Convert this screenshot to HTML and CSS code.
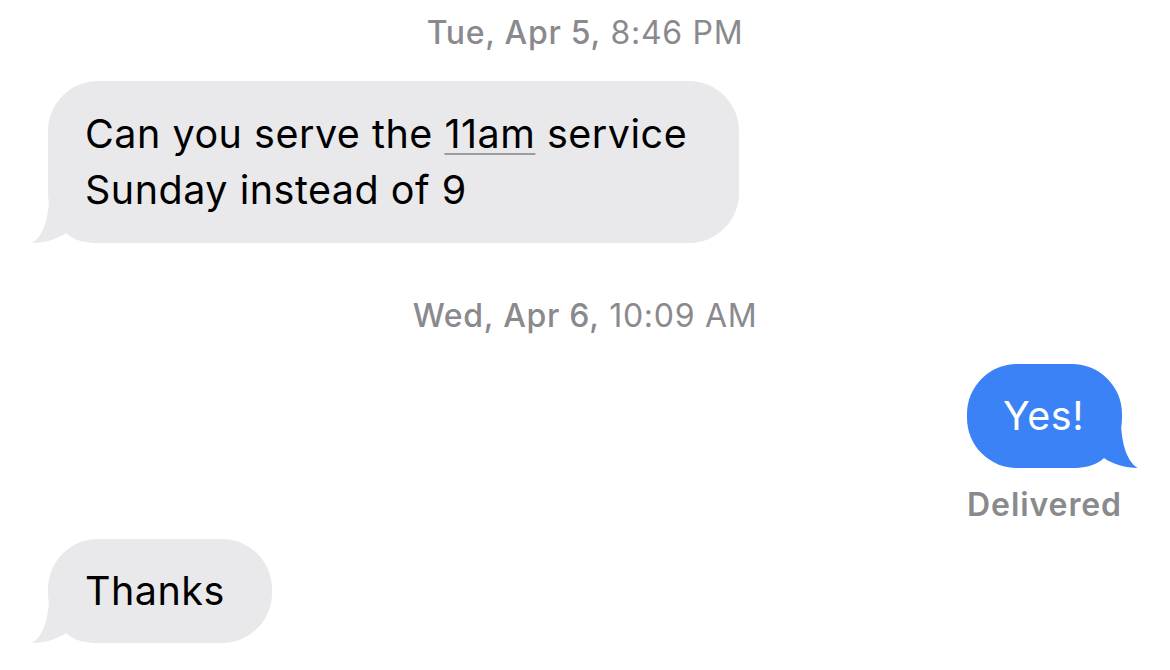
FILE: index.html
```html
<!DOCTYPE html>
<html lang="en">
<head>
<meta charset="utf-8">
<title>Messages</title>
<link rel="stylesheet" href="styles.css">
</head>
<body>
<main class="thread">
  <div class="stamp stamp-first"><span class="stamp-date">Tue, Apr 5,</span> 8:46 PM</div>

  <div class="row row-in">
    <div class="bubble bubble-in bubble-wide">
      <svg class="tail tail-in" viewBox="-16 -44 66 44" width="66" height="44" aria-hidden="true"><path d="M1,-44 C0,-18 -8,-4 -16,0 C-4,0 10,-4 18,-10 C24,-4 34,0 50,0 L50,-44 Z"/></svg>
      <span class="text">Can you serve the <span class="link">11am</span> service<br>Sunday instead of 9</span>
    </div>
  </div>

  <div class="stamp stamp-second"><span class="stamp-date">Wed, Apr 6,</span> 10:09 AM</div>

  <div class="row row-out">
    <div class="bubble bubble-out">
      <svg class="tail tail-out" viewBox="-16 -44 66 44" width="66" height="44" aria-hidden="true"><path d="M1,-44 C0,-18 -8,-4 -16,0 C-4,0 10,-4 18,-10 C24,-4 34,0 50,0 L50,-44 Z"/></svg>
      <span class="text">Yes!</span>
    </div>
  </div>
  <div class="status">Delivered</div>

  <div class="row row-in row-last">
    <div class="bubble bubble-in bubble-short">
      <svg class="tail tail-in" viewBox="-16 -44 66 44" width="66" height="44" aria-hidden="true"><path d="M1,-44 C0,-18 -8,-4 -16,0 C-4,0 10,-4 18,-10 C24,-4 34,0 50,0 L50,-44 Z"/></svg>
      <span class="text">Thanks</span>
    </div>
  </div>
</main>
</body>
</html>
```

FILE: styles.css
```css
html, body {
  margin: 0;
  padding: 0;
  background: #ffffff;
}

body {
  font-family: Inter, "Noto Sans", "Liberation Sans", sans-serif;
  -webkit-font-smoothing: antialiased;
}

.thread {
  display: flex;
  flex-direction: column;
  padding: 13px 48px 0 48px;
}

.stamp {
  text-align: center;
  color: #8a8a8e;
  font-size: 32px;
  line-height: 40px;
  letter-spacing: 0.7px;
  font-weight: 400;
}

.stamp-date {
  font-weight: 500;
}

.stamp-second {
  margin-top: 53px;
}

.row {
  display: flex;
  margin-top: 28px;
}

.row-in {
  justify-content: flex-start;
}

.row-out {
  justify-content: flex-end;
}

.row-last {
  margin-top: 16px;
}

.bubble {
  position: relative;
  font-size: 39.5px;
  line-height: 56px;
  letter-spacing: 0.5px;
  padding: 24px 49px 24px 37px;
  border-radius: 50px;
}

.text {
  position: relative;
  z-index: 1;
}

.bubble-wide {
  padding-top: 25px;
  padding-bottom: 25px;
  padding-right: 52px;
}

.bubble-short {
  padding-right: 47px;
}

.bubble-in {
  background: #e9e9eb;
  color: #000000;
}

.bubble-out {
  background: #3a82f6;
  color: #ffffff;
  padding: 24px 38px 24px 36px;
}

.link {
  text-decoration: underline;
  text-decoration-color: #9b9ba0;
  text-decoration-thickness: 2px;
  text-underline-offset: 5px;
}

.tail {
  position: absolute;
  bottom: 0;
  display: block;
  z-index: 0;
}

.tail-in {
  left: -16px;
  fill: #e9e9eb;
}

.tail-out {
  right: -16px;
  fill: #3a82f6;
  transform: scaleX(-1);
}

.status {
  align-self: flex-end;
  margin-top: 19px;
  color: #8a8a8e;
  font-size: 32px;
  line-height: 36px;
  letter-spacing: 0.9px;
  font-weight: 600;
}
```
